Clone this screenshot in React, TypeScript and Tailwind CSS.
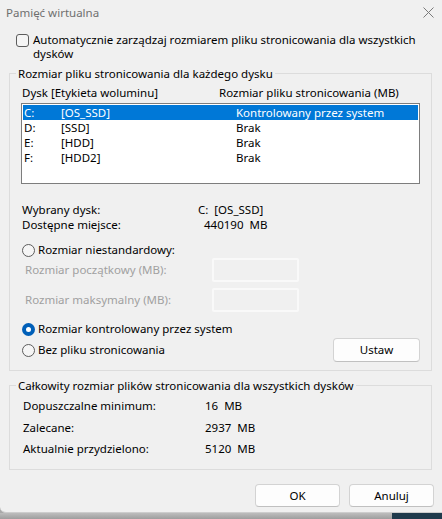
import React from "react";

const rows = [
  ["C:", "[OS_SSD]", "Kontrolowany przez system"],
  ["D:", "[SSD]", "Brak"],
  ["E:", "[HDD]", "Brak"],
  ["F:", "[HDD2]", "Brak"],
];

function Radio({ checked }: { checked?: boolean }) {
  if (checked) {
    return (
      <span className="w-[13px] h-[13px] rounded-full bg-[#005fb8] flex items-center justify-center shrink-0">
        <span className="w-[5px] h-[5px] rounded-full bg-white" />
      </span>
    );
  }
  return <span className="w-[13px] h-[13px] rounded-full border border-[#5c5c5c] bg-[#f5f5f5] shrink-0" />;
}

function Btn({ label, w }: { label: string; w: string }) {
  return (
    <div
      className={`${w} flex items-center justify-center bg-[#fdfdfd] border border-[#d3d3d3] border-b-[#c0c0c0] rounded-[4px] leading-none`}
    >
      {label}
    </div>
  );
}

export default function App() {
  return (
    <div className="w-[442px] h-[519px] flex flex-col bg-[#a9a9a9] overflow-hidden font-['Noto_Sans',sans-serif] text-[11.5px] text-black">
      <div className="h-[513px] shrink-0 bg-[#f0f0f0] border-b border-[#cdcdcd] rounded-bl-[6px] flex flex-col">
        {/* title bar */}
        <div className="h-[26px] flex items-center justify-between pl-[6px] pr-[8px]">
          <span className="text-[#6f6f6f] leading-none">Pamięć wirtualna</span>
          <svg width="11" height="11" viewBox="0 0 11 11" className="mb-[1px]">
            <path d="M0.5 0.5 L10.5 10.5 M10.5 0.5 L0.5 10.5" stroke="#7a7a7a" strokeWidth="1" fill="none" />
          </svg>
        </div>

        {/* checkbox */}
        <div className="mt-[7px] flex pl-[16px]">
          <span className="w-[13px] h-[13px] mt-[1px] rounded-[3px] border border-[#5c5c5c] bg-[#f5f5f5] shrink-0" />
          <span className="ml-[4px] leading-[14px] whitespace-nowrap">
            Automatycznie zarządzaj rozmiarem pliku stronicowania dla wszystkich
            <br />
            dysków
          </span>
        </div>

        {/* group 1 */}
        <fieldset className="mt-[5px] ml-[9px] w-[423px] border border-[#dcdcdc] pb-[8px]">
          <legend className="ml-[6px] px-[2px] leading-[15px]">Rozmiar pliku stronicowania dla każdego dysku</legend>
          <div className="mt-[4px] h-[15px] leading-[15px] flex pl-[12px] whitespace-nowrap">
            <span className="w-[197px]">Dysk [Etykieta woluminu]</span>
            <span>Rozmiar pliku stronicowania (MB)</span>
          </div>
          <div className="mt-[3px] ml-[11px] w-[399px] h-[81px] border border-[#7d7d7d] bg-white p-[1px]">
            {rows.map((r, i) => (
              <div
                key={r[0]}
                className={`h-[15px] leading-[15px] flex whitespace-nowrap ${i === 0 ? "bg-[#0078d7] text-white" : ""}`}
              >
                <span className="w-[38px] pl-[1px]">{r[0]}</span>
                <span className="w-[175px]">{r[1]}</span>
                <span>{r[2]}</span>
              </div>
            ))}
          </div>

          <div className="mt-[18px] pl-[12px]">
            <div className="h-[15px] leading-[15px] flex">
              <span className="w-[176px]">Wybrany dysk:</span>
              <span className="whitespace-pre">C:  [OS_SSD]</span>
            </div>
            <div className="h-[15px] leading-[15px] flex">
              <span className="w-[176px]">Dostępne miejsce:</span>
              <span className="pl-[6px] whitespace-pre">440190  MB</span>
            </div>
          </div>

          <div className="mt-[10px] h-[16px] flex items-center pl-[12px]">
            <Radio />
            <span className="ml-[3px]">Rozmiar niestandardowy:</span>
          </div>

          <div className="h-[24px] flex items-center pl-[15px] text-[#a0a0a0]">
            <span className="w-[187px]">Rozmiar początkowy (MB):</span>
            <span className="w-[87px] h-[24px] border-2 border-[#f9f9f9] rounded-[2px]" />
          </div>
          <div className="mt-[6px] h-[24px] flex items-center pl-[15px] text-[#a0a0a0]">
            <span className="w-[187px]">Rozmiar maksymalny (MB):</span>
            <span className="w-[87px] h-[24px] border-2 border-[#f9f9f9] rounded-[2px]" />
          </div>

          <div className="mt-[9px] h-[16px] flex items-center pl-[12px]">
            <Radio checked />
            <span className="ml-[3px]">Rozmiar kontrolowany przez system</span>
          </div>
          <div className="mt-[1px] h-[24px] flex items-center justify-between pl-[12px] pr-[11px]">
            <div className="flex items-center">
              <Radio />
              <span className="ml-[3px]">Bez pliku stronicowania</span>
            </div>
            <Btn label="Ustaw" w="w-[87px] h-[24px]" />
          </div>
        </fieldset>

        {/* group 2 */}
        <fieldset className="mt-[7px] ml-[9px] w-[423px] border border-[#dcdcdc] pb-[12px]">
          <legend className="ml-[6px] px-[2px] leading-[15px]">Całkowity rozmiar plików stronicowania dla wszystkich dysków</legend>
          <div className="pl-[13px]">
            <div className="mt-[5px] h-[16px] leading-[16px] flex">
              <span className="w-[182px]">Dopuszczalne minimum:</span>
              <span className="whitespace-pre">16  MB</span>
            </div>
            <div className="mt-[6px] h-[16px] leading-[16px] flex">
              <span className="w-[182px]">Zalecane:</span>
              <span className="whitespace-pre">2937  MB</span>
            </div>
            <div className="mt-[5px] h-[16px] leading-[16px] flex">
              <span className="w-[182px]">Aktualnie przydzielono:</span>
              <span className="whitespace-pre">5120  MB</span>
            </div>
          </div>
        </fieldset>

        <div className="mt-[14px] flex justify-end gap-[9px] pr-[8px]">
          <Btn label="OK" w="w-[85px] h-[23px]" />
          <Btn label="Anuluj" w="w-[85px] h-[23px]" />
        </div>
      </div>
      <div className="flex-1 flex">
        <div className="flex-1 bg-gradient-to-b from-[#bdbdbd] to-[#9e9e9e]" />
        <div className="w-[50px] bg-[#1f3a4c]" />
      </div>
    </div>
  );
}
